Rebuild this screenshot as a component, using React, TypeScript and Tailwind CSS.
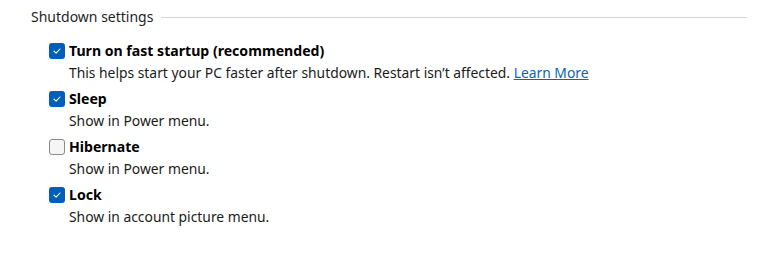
import React from "react";

function Check({ checked }: { checked: boolean }) {
  if (checked) {
    return (
      <div className="w-4 h-4 rounded-[3px] bg-[#005fb8] flex items-center justify-center shrink-0">
        <svg width="10" height="10" viewBox="0 0 10 10" fill="none">
          <path d="M2 5.2 L4.1 7.2 L8 3" stroke="white" strokeWidth="1.1" strokeLinecap="round" strokeLinejoin="round" />
        </svg>
      </div>
    );
  }
  return <div className="w-4 h-4 rounded-[3px] border border-[#8a8a8a] bg-[#f5f5f5] shrink-0" />;
}

const items = [
  {
    label: "Turn on fast startup (recommended)",
    desc: "This helps start your PC faster after shutdown. Restart isn\u2019t affected.",
    link: true,
    checked: true,
  },
  { label: "Sleep", desc: "Show in Power menu.", link: false, checked: true },
  { label: "Hibernate", desc: "Show in Power menu.", link: false, checked: false },
  { label: "Lock", desc: "Show in account picture menu.", link: false, checked: true },
];

export default function App() {
  return (
    <div
      className="w-[767px] h-[253px] bg-white text-[#1b1b1b] pl-[31px] pt-[6px] pr-[20px]"
      style={{ fontFamily: '"Noto Sans", "Open Sans", sans-serif' }}
    >
      <div className="flex items-center h-[22px]">
        <span className="text-[14px] leading-[22px] text-[#1f1f1f]">Shutdown settings</span>
        <div className="flex-1 h-px bg-[#d6d6d6] ml-2" />
      </div>
      <div className="pl-[18px] pt-[12px] flex flex-col gap-[4px]">
        {items.map((it) => (
          <div key={it.label} className="flex flex-col">
            <div className="flex items-center gap-[4px] h-[22px]">
              <Check checked={it.checked} />
              <span className="text-[14.1px] font-bold leading-[22px] text-black">{it.label}</span>
            </div>
            <div className="pl-[20px] text-[13.85px] leading-[22px] text-[#1b1b1b]">
              {it.desc}
              {it.link && (
                <>
                  {" "}
                  <a className="text-[#0067c0] underline">Learn More</a>
                </>
              )}
            </div>
          </div>
        ))}
      </div>
    </div>
  );
}
